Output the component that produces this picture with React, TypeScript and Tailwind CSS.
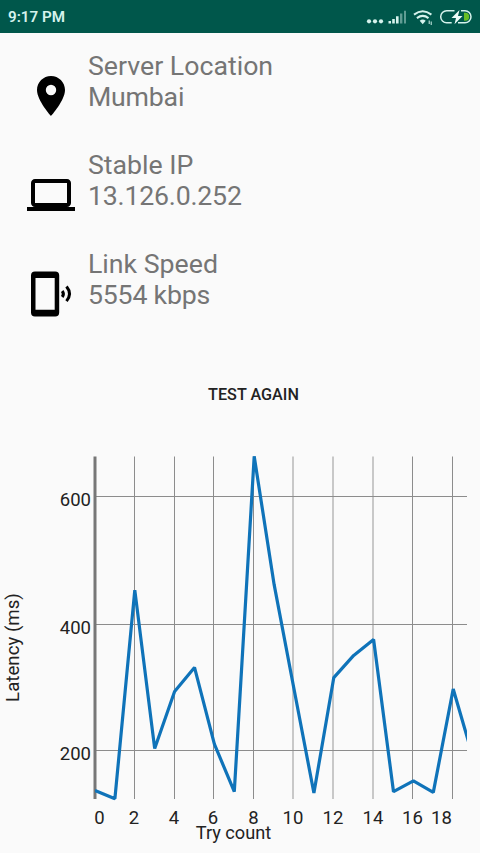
import type { ReactNode } from "react";

interface InfoRowProps {
  icon: ReactNode;
  label: string;
  value: string;
}

const LATENCY = [137, 124, 453, 203, 293, 331, 210, 135, 664, 462, 297, 133, 315, 350, 375, 135, 152, 134, 297, 189];

const X_TICKS = [
  { label: "0", line: 0, text: 99.5 },
  { label: "2", line: 134.5, text: 134 },
  { label: "4", line: 174.5, text: 174 },
  { label: "6", line: 213.5, text: 213 },
  { label: "8", line: 253.5, text: 253.5 },
  { label: "10", line: 293, text: 293 },
  { label: "12", line: 333, text: 333 },
  { label: "14", line: 373, text: 373 },
  { label: "16", line: 412.5, text: 412.5 },
  { label: "18", line: 452.5, text: 441.5 },
];

const Y_TICKS = [
  { label: "600", y: 50.5 },
  { label: "400", y: 178.5 },
  { label: "200", y: 304.5 },
];

const toX = (i: number) => 95 + i * 19.9;
const toY = (ms: number) => 304.5 - (ms - 200) * 0.634;

function PinIcon() {
  return (
    <svg viewBox="0 0 24 24" className="size-12" fill="#000">
      <path d="M12 2C8.13 2 5 5.13 5 9c0 5.25 7 13 7 13s7-7.75 7-13c0-3.87-3.13-7-7-7zm0 9.6a2.6 2.6 0 1 1 0-5.2 2.6 2.6 0 0 1 0 5.2z" />
    </svg>
  );
}

function LaptopIcon() {
  return (
    <svg viewBox="0 0 24 24" className="size-12" fill="#000">
      <path d="M20 18c1.1 0 2-.9 2-2V6c0-1.1-.9-2-2-2H4c-1.1 0-2 .9-2 2v10c0 1.1.9 2 2 2H0v2h24v-2h-4zM4 6h16v10H4V6z" />
    </svg>
  );
}

function PhoneIcon() {
  return (
    <svg viewBox="0 0 48 48" className="size-12">
      <path fill="#000" fillRule="evenodd" d="M8 1.5h20.2a4 4 0 0 1 4 4v36.9a4 4 0 0 1-4 4H8a4 4 0 0 1-4-4V5.5a4 4 0 0 1 4-4zM8.500 8v31.700h19.200V8z" />
      <path fill="none" stroke="#000" strokeWidth="3" d="M35.200 21q2.400 3 0 6M39.500 16.500q6 7.300 0 14.600" />
    </svg>
  );
}

function InfoRow({ icon, label, value }: InfoRowProps) {
  return (
    <div className="flex h-[99px]">
      <div className="w-[61.5px] shrink-0 pt-[21px]">{icon}</div>
      <div className="text-[26.7px] leading-[31.2px] text-[#757575]">
        <div>{label}</div>
        <div className="tracking-[-0.2px]">{value}</div>
      </div>
    </div>
  );
}

function StatusBar() {
  return (
    <header className="flex h-[33px] items-center justify-between bg-[#00574b] pr-2 pl-2 text-[#d5f2ec]">
      <span className="pt-0.5 text-[15.2px] font-semibold">9:17 PM</span>
      <svg viewBox="0 0 108 24" className="h-6 w-[108px]" fill="none">
        <g fill="#d5f2ec">
          <circle cx="5" cy="16.300" r="2.100" />
          <circle cx="11" cy="16.300" r="2.100" />
          <circle cx="17" cy="16.300" r="2.100" />
          <path d="M24.500 16h2.500v2.500h-2.500zM28.200 14h2.600v4.500h-2.600zM32 11.200h2.600v7.300h-2.600z" />
          <path opacity=".45" d="M36 8.500h2.400v10h-2.400zM40 5.800h2v12.700h-2z" />
          <path d="M58.700 19.300l-3-3.600q3-2.300 6 0z" />
        </g>
        <path stroke="#d5f2ec" strokeWidth="2" d="M50 9.600q8.700-6.600 17.400 0M52.900 13.100q5.800-4.400 11.600 0" />
        <path stroke="#d5f2ec" strokeWidth="1" d="M65.200 15.500v3.500M67.200 16.500v3.500" />
        <path d="M100 7.800h1.200a4 4 0 0 1 0 8h-1.200z" fill="#67bd24" />
        <path stroke="#d5f2ec" strokeWidth="1.500" d="M90.500 5.700H82.700a6 6 0 0 0 0 12h5M97 5.700h4a6 6 0 0 1 0 12h-7" />
        <path d="M95.500 5l-8 8h4.500l-1.500 6.300 8-8.300h-4.500z" fill="#eefcf8" />
      </svg>
    </header>
  );
}

function LatencyChart() {
  const points = LATENCY.map((ms, i) => `${toX(i)},${toY(ms)}`).join(" ");
  return (
    <svg viewBox="0 0 480 407" className="block h-[407px] w-[480px]" fontSize="18.5" fill="#222">
      <clipPath id="plot">
        <rect x="95" y="0" width="372" height="370" />
      </clipPath>
      {X_TICKS.slice(1).map((t) => {
        const wide = Number.isInteger(t.line);
        return <path key={t.label} d={`M${t.line} 10.5V353`} stroke={wide ? "#c8c8c8" : "#8c8c8c"} strokeWidth={wide ? 2 : 1} />;
      })}
      {Y_TICKS.map((t) => (
        <path key={t.label} d={`M95 ${t.y}H467`} stroke="#8c8c8c" strokeWidth="1" />
      ))}
      <path d="M95 10.5V353" stroke="#777" strokeWidth="3" />
      <polyline points={points} fill="none" stroke="#0f73b9" strokeWidth="3.2" strokeLinejoin="bevel" clipPath="url(#plot)" />
      {Y_TICKS.map((t) => (
        <text key={t.label} x="91" y={t.y + 9.5} textAnchor="end">{t.label}</text>
      ))}
      {X_TICKS.map((t) => (
        <text key={t.label} x={t.text} y="378" textAnchor="middle">{t.label}</text>
      ))}
      <text x="233.5" y="393" textAnchor="middle" fontSize="18.2">Try count</text>
      <text transform="translate(18.5 201.5) rotate(-90)" textAnchor="middle" fontSize="18.700">Latency (ms)</text>
    </svg>
  );
}

export default function App() {
  return (
    <div className="flex h-[853px] w-[480px] flex-col overflow-hidden bg-[#fafafa] font-['Roboto',sans-serif]">
      <StatusBar />
      <main className="flex flex-col">
        <section className="pt-[18px] pl-[26.5px]">
          <InfoRow icon={<PinIcon />} label="Server Location" value="Mumbai" />
          <InfoRow icon={<LaptopIcon />} label="Stable IP" value="13.126.0.252" />
          <InfoRow icon={<PhoneIcon />} label="Link Speed" value="5554 kbps" />
        </section>
        <button className="mt-[23px] mb-[27px] ml-[27px] flex h-12 items-center justify-center text-[16.2px] font-medium text-[#222]">TEST AGAIN</button>
        <LatencyChart />
      </main>
    </div>
  );
}
